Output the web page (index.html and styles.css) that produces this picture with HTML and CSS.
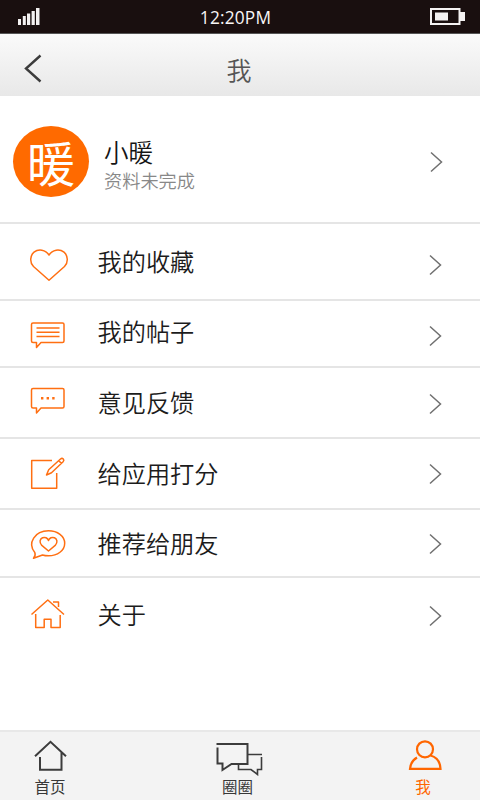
FILE: index.html
```html
<!DOCTYPE html>
<html lang="zh-CN">
<head>
<meta charset="utf-8">
<title>我</title>
<link rel="stylesheet" href="styles.css">
</head>
<body>
<div class="status">
  <svg class="signal" width="22" height="18" viewBox="18 8 22 18" fill="#f4f2f2"><path d="M18 19h3v6h-3zM22.8 16h3v9h-3zM27 13.5h3.2V25H27zM31.6 11h3.2v14h-3.200zM36 8h3.500v17H36z"/></svg>
  <span class="time">12:20PM</span>
  <svg class="battery" width="36" height="18" viewBox="430 8 36 18"><path d="M431 9h28.500v15H431z" fill="none" stroke="#f4f2f2" stroke-width="2"/><path d="M435 12.500h13v8h-13zM460 12h5v9h-5z" fill="#f4f2f2"/></svg>
</div>
<header class="header">
  <svg class="back" width="30" height="40" viewBox="18 49 30 40"><path d="M40.500 55.500L26 68.500l14.500 13"/></svg>
  <h1 class="title">我</h1>
</header>
<main class="content">
  <section class="profile">
    <div class="avatar"><span>暖</span></div>
    <div class="who">
      <div class="name">小暖</div>
      <div class="note">资料未完成</div>
    </div>
    <svg class="chevron" width="14" height="22" viewBox="0 0 14 22"><path d="M1 1.500L11.500 11 1 20.500"/></svg>
  </section>
  <div class="row favorites">
    <svg class="icon" width="50" height="75" viewBox="24 224 50 75"><path d="M49 280.300L33.500 266.500C29.500 262.500 30 255.500 34 252.200C38.500 248.500 45.500 249.500 49 255C52.500 249.500 59.500 248.500 64 252.200C68 255.500 68.500 262.500 64.500 266.500Z"/></svg>
    <span class="label">我的收藏</span>
    <svg class="chevron" width="14" height="22" viewBox="0 0 14 22"><path d="M1 1.500L11.500 11 1 20.500"/></svg>
  </div>
  <div class="row posts">
    <svg class="icon" width="50" height="65" viewBox="24 301 50 65"><path d="M33 323h29.500q1.500 0 1.500 1.500v16.500q0 1.500-1.500 1.500H41l-4.500 5v-5H33q-1.500 0-1.500-1.500v-16.500q0-1.500 1.500-1.500zM36.500 328h23M36.500 332.300h23M36.500 336.600h23"/></svg>
    <span class="label">我的帖子</span>
    <svg class="chevron" width="14" height="22" viewBox="0 0 14 22"><path d="M1 1.500L11.500 11 1 20.500"/></svg>
  </div>
  <div class="row feedback">
    <svg class="icon" width="50" height="69" viewBox="24 368 50 69"><path d="M33 388.500h29.500q1.500 0 1.500 1.500v16.500q0 1.500-1.500 1.500H41l-4.500 5v-5H33q-1.500 0-1.500-1.500V390q0-1.500 1.500-1.500z"/><path class="solid" d="M41 397h2.400v2.400H41zM46.600 397H49v2.400h-2.400zM52.200 397h2.400v2.400h-2.400z"/></svg>
    <span class="label">意见反馈</span>
    <svg class="chevron" width="14" height="22" viewBox="0 0 14 22"><path d="M1 1.500L11.500 11 1 20.500"/></svg>
  </div>
  <div class="row rate">
    <svg class="icon" width="50" height="69" viewBox="24 439 50 69"><path d="M52 460.500H31.700v27.800h25V473M46.500 475l2.200-5.200L60.500 459q1.500-1.200 2.800 0 1.200 1.300-.2 2.800L51.500 472.800zM58.800 460.700l2.900 2.900"/></svg>
    <span class="label">给应用打分</span>
    <svg class="chevron" width="14" height="22" viewBox="0 0 14 22"><path d="M1 1.500L11.500 11 1 20.500"/></svg>
  </div>
  <div class="row recommend">
    <svg class="icon" width="50" height="66" viewBox="24 510 50 66"><path d="M34.800 552.500C27 543 35 530.800 48.500 530.800C57.500 530.800 64.700 536 64.700 543.200C64.700 550.500 57.500 555.800 48.500 555.800Q45 555.800 42.500 555L33.500 558.200Q36 555.500 34.800 552.500ZM48.500 551L41.800 545.400C39 542.500 39.800 539 42.500 537.800C45 536.700 47.600 538 48.500 540.500C49.400 538 52 536.700 54.500 537.800C57.200 539 58 542.500 55.200 545.400Z"/></svg>
    <span class="label">推荐给朋友</span>
    <svg class="chevron" width="14" height="22" viewBox="0 0 14 22"><path d="M1 1.500L11.500 11 1 20.500"/></svg>
  </div>
  <div class="row about">
    <svg class="icon" width="50" height="74" viewBox="24 578 50 74"><path d="M31.500 614.500L47.800 600l16.200 14.500M35.700 614v13.500h8.500v-8.300h6.800v8.300h9.200V615M53 602h5.500v5"/></svg>
    <span class="label">关于</span>
    <svg class="chevron" width="14" height="22" viewBox="0 0 14 22"><path d="M1 1.500L11.500 11 1 20.500"/></svg>
  </div>
</main>
<nav class="tabs">
  <div class="tab">
    <svg width="56" height="44" viewBox="22 732 56 44"><path d="M35 756.200L50.500 741.800l15.500 14.400M40 757v12.700h21.500V752.500"/></svg>
    <span>首页</span>
  </div>
  <div class="tab">
    <svg width="56" height="44" viewBox="210 732 56 44"><path d="M216.500 744h31v20h-16l-9 6v-6.500h-5V747.500"/><path class="thin" d="M248 754.500h14M261.500 757v12.500h-4v5l-6.500-5h-12.500V764"/></svg>
    <span>圈圈</span>
  </div>
  <div class="tab active">
    <svg width="56" height="44" viewBox="397 732 56 44"><circle cx="425" cy="749.300" r="8"/><path d="M417 757.500Q410.500 761.500 410 768.800h30.500Q440 758 430.500 755.500"/></svg>
    <span>我</span>
  </div>
</nav>
</body>
</html>
```
FILE: styles.css
```css
* { box-sizing: border-box; }

body {
  margin: 0;
  width: 480px;
  height: 800px;
  display: flex;
  flex-direction: column;
  overflow: hidden;
  background: #fff;
  color: #1c1c1c;
  font-family: "Noto Sans CJK SC", sans-serif;
  font-weight: 350;
}

svg { display: block; flex: none; }

.status {
  height: 34px;
  padding: 8px 14px 0 18px;
  display: flex;
  justify-content: space-between;
  background: #190f0f;
  border-bottom: 1px solid #555;
}

.time {
  color: #f8f6f6;
  font: 400 17.300px/20px "Open Sans", sans-serif;
  letter-spacing: 0.200px;
  margin-right: -1px;
}

.header {
  height: 62px;
  padding: 15px 18px 0;
  display: grid;
  grid-template-columns: 30px 1fr 30px;
  background: linear-gradient(#fafafa, #e8e8e8);
}

.back path { fill: none; stroke: #3c3c3c; stroke-width: 2.4; }

.title {
  margin: 0;
  font-size: 25px;
  line-height: 41px;
  font-weight: 350;
  text-align: center;
  color: #555;
  padding-right: 2px;
}

.content { flex: 1; }

.profile {
  height: 128px;
  padding: 30px 36.500px 0 13px;
  display: flex;
  align-items: flex-start;
  border-bottom: 2px solid #e5e5e5;
}

.avatar {
  width: 76px;
  height: 71px;
  border-radius: 50%;
  background: #ff6a00;
  color: #fff;
  font-size: 48px;
  line-height: 70px;
  text-align: center;
  font-weight: 400;
}

.who { flex: 1; padding: 8px 0 0 15px; }
.name { font-size: 24.500px; line-height: 35px; color: #151515; }
.note { font-size: 18.200px; line-height: 23px; color: #888; }

.chevron path { fill: none; stroke: #707070; stroke-width: 1.5; }
.profile .chevron { margin-top: 25px; }

.row {
  padding: 0 37.500px 0 24px;
  display: flex;
  align-items: flex-start;
  border-bottom: 2px solid #e5e5e5;
}

.icon path { fill: none; stroke: #ff6f12; stroke-width: 1.5; stroke-linejoin: round; }
.icon .solid { fill: #ff6f12; stroke: none; }
.label { flex: 1; padding-left: 23.500px; font-size: 24.200px; }

.favorites { height: 77px; line-height: 74px; }
.posts { height: 67px; line-height: 60px; }
.feedback { height: 71px; line-height: 68px; }
.rate { height: 71px; line-height: 67px; }
.recommend { height: 68px; line-height: 66px; }
.about { height: 76px; line-height: 72px; border-bottom: 0; }

.favorites .chevron { margin-top: 30px; }
.posts .chevron { margin-top: 24px; }
.feedback .chevron { margin-top: 25px; }
.rate .chevron { margin-top: 24px; }
.recommend .chevron { margin-top: 23px; }
.about .chevron { margin-top: 27px; }

.tabs {
  height: 70px;
  padding: 0 27px 0 22px;
  display: flex;
  justify-content: space-between;
  background: #f3f3f3;
  border-top: 2px solid #e8e8e8;
}

.tab {
  width: 56px;
  display: flex;
  flex-direction: column;
  align-items: center;
  color: #383838;
  font-size: 15.500px;
  line-height: 20px;
  font-weight: 400;
}

.tab path, .tab circle { fill: none; stroke: #3c3c3c; stroke-width: 2; }
.tab .thin { stroke-width: 1.6; }
.tab.active { color: #ff6600; }
.tab.active path, .tab.active circle { stroke: #ff6600; stroke-width: 2.2; }
.tab.active span { padding-right: 4px; }
```
